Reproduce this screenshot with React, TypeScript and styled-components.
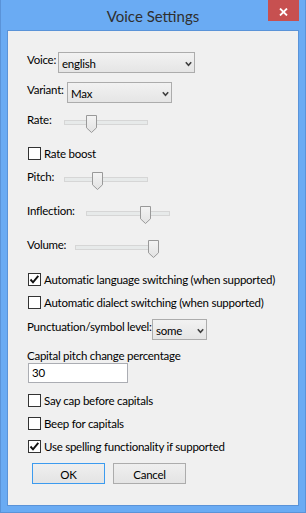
import React from 'react';
import styled, { createGlobalStyle } from 'styled-components';

const Global = createGlobalStyle`
  html, body { margin: 0; padding: 0; background: #ffffff; }
  body { font-family: Lato, "Liberation Sans", sans-serif; font-size: 11.5px; letter-spacing: -0.25px; color: #000; }
`;

const Window = styled.div`
  width: 306px;
  height: 513px;
  box-sizing: border-box;
  background: #6aabf3;
  border: 1px solid #5a93d8;
  border-top: none;
  padding: 0 6px 6px;
  display: flex;
  flex-direction: column;
`;

const TitleBar = styled.div`
  height: 30px;
  flex-shrink: 0;
  display: grid;
  grid-template-columns: 1fr auto 1fr;
  align-items: center;
`;

const Title = styled.div`
  grid-column: 2;
  font-size: 15px;
  letter-spacing: 0;
  color: #2f2f2f;
  line-height: 18px;
  padding-top: 1px;
`;

const CloseButton = styled.div`
  grid-column: 3;
  justify-self: end;
  align-self: start;
  width: 31px;
  height: 21px;
  background: #c75050;
  display: flex;
  align-items: center;
  justify-content: center;
  padding-top: 2px;
  box-sizing: border-box;
`;

const Client = styled.div`
  flex: 1;
  position: relative;
  background: #f0f0f0;
  border: 1px solid #5a93d8;
  padding-left: 19px;
  display: flex;
  flex-direction: column;
  overflow: hidden;
`;

const Row = styled.div<{ $mt: number; $h: number; $top?: boolean }>`
  display: flex;
  align-items: ${p => (p.$top ? 'flex-start' : 'center')};
  margin-top: ${p => p.$mt}px;
  height: ${p => p.$h}px;
  flex-shrink: 0;
`;

const Label = styled.span<{ $w?: number; $mt?: number }>`
  flex-shrink: 0;
  white-space: nowrap;
  line-height: 14px;
  ${p => (p.$w ? `width: ${p.$w}px;` : '')}
  margin-top: ${p => p.$mt ?? 0}px;
`;

const Select = styled.div<{ $w: number }>`
  width: ${p => p.$w}px;
  height: 21px;
  box-sizing: border-box;
  border: 1px solid #acacac;
  background: linear-gradient(#f2f2f2, #e5e5e5);
  display: flex;
  align-items: center;
  justify-content: space-between;
  padding: 2px 2px 0 3px;
  flex-shrink: 0;
`;

const Chevron = () => (
  <svg width="7" height="6" viewBox="0 0 7 6">
    <path d="M0.8 1.2 L3.5 4.2 L6.2 1.2" fill="none" stroke="#404040" strokeWidth="1.6" />
  </svg>
);

const Box = styled.span`
  width: 13px;
  height: 13px;
  box-sizing: border-box;
  border: 1px solid #333333;
  background: #ffffff;
  display: flex;
  align-items: center;
  justify-content: center;
  margin-left: 1px;
  margin-right: 3px;
  flex-shrink: 0;
`;

const Check = () => (
  <svg width="11" height="11" viewBox="0 0 11 11">
    <path d="M1.5 5.5 L4 8.3 L9.3 1.8" fill="none" stroke="#111" strokeWidth="1.9" />
  </svg>
);

const CheckRow: React.FC<{ mt: number; checked?: boolean; label: string }> = ({ mt, checked, label }) => (
  <Row $mt={mt} $h={13}>
    <Box>{checked && <Check />}</Box>
    <Label>{label}</Label>
  </Row>
);

const Track = styled.div`
  position: relative;
  width: 84px;
  height: 18px;
  flex-shrink: 0;
  &::before {
    content: '';
    position: absolute;
    left: 0;
    right: 0;
    top: 5px;
    height: 5px;
    box-sizing: border-box;
    border: 1px solid #d6d6d6;
    background: #e7eaea;
  }
`;

const Thumb = styled.svg<{ $left: number }>`
  position: absolute;
  top: 0;
  left: ${p => p.$left}px;
`;

const Slider: React.FC<{ value: number }> = ({ value }) => (
  <Track>
    <Thumb $left={Math.round(value * 73)} width="11" height="18" viewBox="0 0 11 18">
      <defs>
        <linearGradient id="tg" x1="0" y1="0" x2="0" y2="1">
          <stop offset="0" stopColor="#f4f4f4" />
          <stop offset="1" stopColor="#e2e2e2" />
        </linearGradient>
      </defs>
      <path d="M0.5 0.5 H10.5 V12.8 L5.5 17.5 L0.5 12.8 Z" fill="url(#tg)" stroke="#999999" />
    </Thumb>
  </Track>
);

const SliderRow: React.FC<{ mt: number; label: string; w: number; value: number }> = ({ mt, label, w, value }) => (
  <Row $mt={mt} $h={18} $top>
    <Label $w={w} $mt={-2}>{label}</Label>
    <Slider value={value} />
  </Row>
);

const Input = styled.div`
  width: 100px;
  height: 20px;
  box-sizing: border-box;
  border: 1px solid #abadb3;
  background: #ffffff;
  margin-left: 1px;
  padding: 2px 0 0 3px;
  line-height: 14px;
`;

const Button = styled.div<{ $default?: boolean }>`
  width: 73px;
  height: 21px;
  box-sizing: border-box;
  border: 1px solid ${p => (p.$default ? '#3c9bef' : '#acacac')};
  background: linear-gradient(#efefef, #e4e4e4);
  display: flex;
  align-items: center;
  justify-content: center;
  padding-top: 1px;
  flex-shrink: 0;
`;

const ButtonRow = styled.div`
  display: flex;
  gap: 8px;
  margin-top: 10px;
  margin-left: 5px;
`;

export default function App() {
  return (
    <>
      <Global />
      <Window>
        <TitleBar>
          <Title>Voice Settings</Title>
          <CloseButton>
            <svg width="9" height="8" viewBox="0 0 9 8">
              <path d="M1 0.5 L8 7.5 M8 0.5 L1 7.5" stroke="#ffffff" strokeWidth="1.8" />
            </svg>
          </CloseButton>
        </TitleBar>
        <Client>
          <Row $mt={21} $h={21} $top>
            <Label $w={31} $mt={1}>Voice:</Label>
            <Select $w={137}>
              <span>english</span>
              <Chevron />
            </Select>
          </Row>
          <Row $mt={9} $h={21} $top>
            <Label $w={40} $mt={1}>Variant:</Label>
            <Select $w={105}>
              <span>Max</span>
              <Chevron />
            </Select>
          </Row>
          <SliderRow mt={12} label="Rate:" w={37} value={0.3} />
          <CheckRow mt={14} label="Rate boost" />
          <SliderRow mt={12} label="Pitch:" w={37} value={0.384} />
          <SliderRow mt={16} label="Inflection:" w={59} value={0.74} />
          <SliderRow mt={16} label="Volume:" w={48} value={1} />
          <CheckRow mt={15} checked label="Automatic language switching (when supported)" />
          <CheckRow mt={10} label="Automatic dialect switching (when supported)" />
          <Row $mt={10} $h={21} $top>
            <Label $w={125} $mt={1}>Punctuation/symbol level:</Label>
            <Select $w={55}>
              <span>some</span>
              <Chevron />
            </Select>
          </Row>
          <Row $mt={9} $h={14}>
            <Label>Capital pitch change percentage</Label>
          </Row>
          <Row $mt={0} $h={20}>
            <Input>30</Input>
          </Row>
          <CheckRow mt={11} label="Say cap before capitals" />
          <CheckRow mt={10} label="Beep for capitals" />
          <CheckRow mt={10} checked label="Use spelling functionality if supported" />
          <ButtonRow>
            <Button $default>OK</Button>
            <Button>Cancel</Button>
          </ButtonRow>
        </Client>
      </Window>
    </>
  );
}
